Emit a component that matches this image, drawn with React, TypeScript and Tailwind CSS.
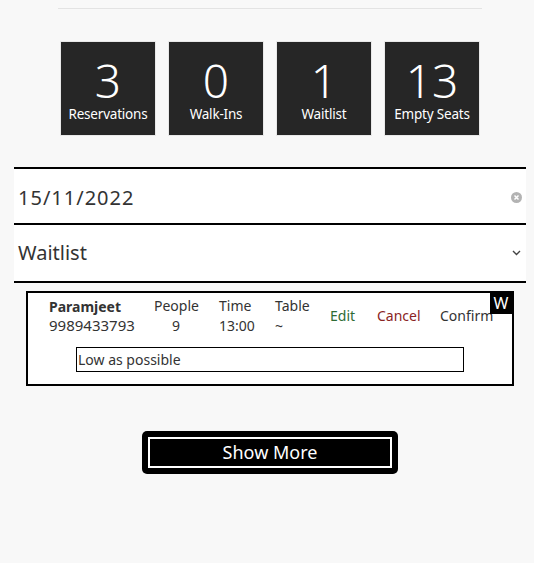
import React from 'react';

const stats = [
  { value: '3', label: 'Reservations' },
  { value: '0', label: 'Walk-Ins' },
  { value: '1', label: 'Waitlist' },
  { value: '13', label: 'Empty Seats' },
];

const App = () => {
  return (
    <div className="min-h-[563px] bg-[#f8f8f8] font-['Noto_Sans',sans-serif] text-[#333]">
      <div className="pt-[8px] pl-[14px] w-[526px]">
        {/* top divider */}
        <div className="ml-[44px] w-[424px] h-px bg-[#e3e3e3]" />

        {/* Stats */}
        <div className="mt-[33px] ml-[47px] flex gap-[14px]">
          {stats.map((s) => (
            <div
              key={s.label}
              className="w-[94px] h-[93px] bg-[#262626] flex flex-col items-center text-white outline outline-1 outline-[#e8e8e8]"
            >
              <div className="mt-[14px] text-[46px] leading-[48px] font-light">{s.value}</div>
              <div className="mt-[1px] text-[13.5px] leading-[18px] tracking-[-0.2px]">{s.label}</div>
            </div>
          ))}
        </div>

        {/* Date + filter */}
        <div className="mt-[32px] w-[512px] bg-white">
          <div className="border-t-2 border-black h-[56px] flex items-center pl-[4px] pr-[4px] pt-[3px]">
            <span className="flex-1 text-[20px] tracking-[1px] text-[#333]">15/11/2022</span>
            <span className="w-[11px] h-[11px] rounded-full bg-[#b3b3b3] flex items-center justify-center">
              <svg width="7" height="7" viewBox="0 0 7 7">
                <path d="M1.5 1.5 L5.5 5.5 M5.5 1.5 L1.5 5.5" stroke="white" strokeWidth="1.5" />
              </svg>
            </span>
          </div>
          <div className="border-t-2 border-black h-[58px] flex items-center pl-[4px] pr-[5px]">
            <span className="flex-1 text-[20px] text-[#333]">Waitlist</span>
            <svg width="9" height="6" viewBox="0 0 9 6">
              <path d="M1 1 L4.5 4.5 L8 1" stroke="#444" strokeWidth="1.4" fill="none" />
            </svg>
          </div>
          <div className="border-t-2 border-black" />
        </div>

        {/* Waitlist card */}
        <div className="mt-[8px] ml-[12px] w-[488px] h-[95px] border-2 border-black bg-white relative">
          <div className="absolute top-0 right-0 w-[22px] h-[21px] bg-black text-white text-[16px] leading-[21px] text-center">
            W
          </div>
          <div className="flex items-center pl-[21px] pt-[3px] text-[14px] leading-[20px]">
            <div className="w-[105px]">
              <div className="font-bold leading-[18px]">Paramjeet</div>
              <div className="text-[15px] leading-[19px]">9989433793</div>
            </div>
            <div className="w-[65px]">
              <div className="w-[44px] text-center">People</div>
              <div className="w-[44px] text-center">9</div>
            </div>
            <div className="w-[56px]">
              <div>Time</div>
              <div>13:00</div>
            </div>
            <div className="w-[55px]">
              <div>Table</div>
              <div>~</div>
            </div>
            <div className="w-[47px] text-[#2f6b35]">Edit</div>
            <div className="w-[63px] text-[#8a2424]">Cancel</div>
            <div>Confirm</div>
          </div>
          <div className="mt-[11px] mx-auto w-[388px] h-[25px] border border-black pl-[1px] text-[14px] leading-[23px]">
            Low as possible
          </div>
        </div>

        {/* Show more */}
        <div className="mt-[45px] ml-[128px]">
          <button className="w-[256px] h-[43px] bg-black rounded-[5px] p-[6px]">
            <div className="h-full border-2 border-white flex items-center justify-center text-white text-[18px]">
              Show More
            </div>
          </button>
        </div>
      </div>
    </div>
  );
};

export default App;
